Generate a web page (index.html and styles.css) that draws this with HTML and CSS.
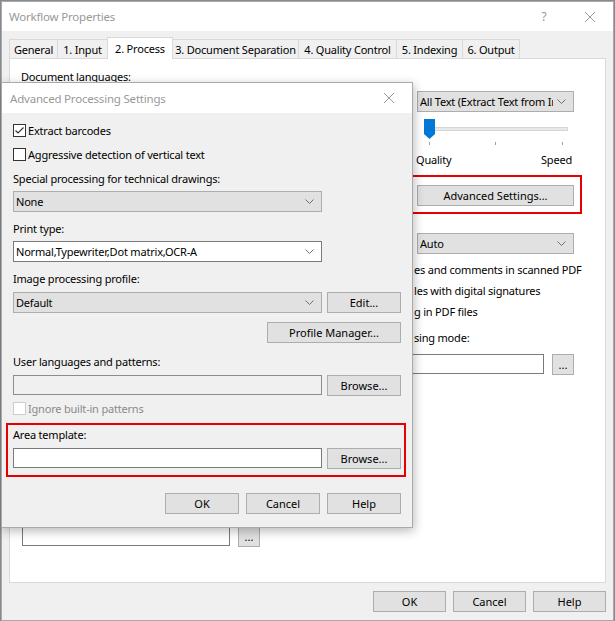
FILE: index.html
```html
<!DOCTYPE html>
<html lang="en">
<head>
    <meta charset="UTF-8">
    <title>Workflow Properties</title>
    <link rel="stylesheet" href="styles.css">
</head>
<body>
    <div class="window">
        <div class="titlebar">
            <span class="title">Workflow Properties</span>
            <span class="title-btn">?</span>
            <span class="title-btn">
                <svg width="10" height="10" viewBox="0 0 10 10"><path d="M0 0L10 10M10 0L0 10" stroke="#999" stroke-width="1"/></svg>
            </span>
        </div>
        <div class="window-body">
            <div class="tabs">
                <div class="tab">General</div>
                <div class="tab">1. Input</div>
                <div class="tab active">2. Process</div>
                <div class="tab">3. Document Separation</div>
                <div class="tab">4. Quality Control</div>
                <div class="tab">5. Indexing</div>
                <div class="tab">6. Output</div>
            </div>
            <div class="panel">
                <div class="panel-cols">
                    <div class="panel-left">
                        <div class="label">Document languages:</div>
                    </div>
                    <div class="panel-right">
                        <div class="combo combo-top">
                            <span class="combo-text">All Text (Extract Text from Images)</span>
                            <svg class="chevron" width="9" height="5" viewBox="0 0 9 5"><path d="M0.5 0.5L4.5 4.5L8.5 0.5" fill="none" stroke="#707070"/></svg>
                        </div>
                        <svg class="slider" width="160" height="31" viewBox="0 0 160 31">
                            <rect x="10.5" y="12.5" width="143" height="3" fill="#e7eaea" stroke="#d6d6d6"/>
                            <path d="M10 4H21V19L15.5 24L10 19Z" fill="#0078d7"/>
                            <rect x="15" y="27" width="1" height="3" fill="#a0a0a0"/>
                            <rect x="81" y="27" width="1" height="3" fill="#a0a0a0"/>
                            <rect x="148" y="27" width="1" height="3" fill="#a0a0a0"/>
                        </svg>
                        <div class="slider-labels">
                            <span>Quality</span>
                            <span>Speed</span>
                        </div>
                        <div class="highlight highlight-right">
                            <button class="btn btn-wide">Advanced Settings...</button>
                        </div>
                        <div class="combo combo-auto">
                            <span class="combo-text">Auto</span>
                            <svg class="chevron" width="9" height="5" viewBox="0 0 9 5"><path d="M0.5 0.5L4.5 4.5L8.5 0.5" fill="none" stroke="#707070"/></svg>
                        </div>
                        <div class="option-line first">es and comments in scanned PDF</div>
                        <div class="option-line">les with digital signatures</div>
                        <div class="option-line">g in PDF files</div>
                        <div class="option-line mode">sing mode:</div>
                        <div class="file-row file-row-right">
                            <input class="edit" type="text">
                            <button class="btn btn-dots">...</button>
                        </div>
                    </div>
                </div>
                <div class="file-row file-row-bottom">
                    <input class="edit edit-bottom" type="text">
                    <button class="btn btn-dots">...</button>
                </div>
            </div>
            <div class="button-row">
                <button class="btn">OK</button>
                <button class="btn">Cancel</button>
                <button class="btn">Help</button>
            </div>
        </div>
    </div>

    <div class="dialog">
        <div class="dialog-titlebar">
            <span class="title">Advanced Processing Settings</span>
            <span class="title-btn">
                <svg width="10" height="10" viewBox="0 0 10 10"><path d="M0 0L10 10M10 0L0 10" stroke="#999" stroke-width="1"/></svg>
            </span>
        </div>
        <div class="dialog-body">
            <div class="check-row">
                <span class="checkbox">
                    <svg width="11" height="11" viewBox="0 0 11 11"><path d="M1.5 5.5L4 8L9.5 2.5" fill="none" stroke="#333" stroke-width="1.2"/></svg>
                </span>
                <span>Extract barcodes</span>
            </div>
            <div class="check-row row-gap">
                <span class="checkbox"></span>
                <span>Aggressive detection of vertical text</span>
            </div>
            <div class="label row-gap">Special processing for technical drawings:</div>
            <div class="combo combo-field">
                <span class="combo-text">None</span>
                <svg class="chevron" width="9" height="5" viewBox="0 0 9 5"><path d="M0.5 0.5L4.5 4.5L8.5 0.5" fill="none" stroke="#707070"/></svg>
            </div>
            <div class="label row-gap">Print type:</div>
            <div class="combo combo-field combo-white">
                <span class="combo-text">Normal,Typewriter,Dot matrix,OCR-A</span>
                <svg class="chevron" width="9" height="5" viewBox="0 0 9 5"><path d="M0.5 0.5L4.5 4.5L8.5 0.5" fill="none" stroke="#707070"/></svg>
            </div>
            <div class="label row-gap">Image processing profile:</div>
            <div class="field-row">
                <div class="combo">
                    <span class="combo-text">Default</span>
                    <svg class="chevron" width="9" height="5" viewBox="0 0 9 5"><path d="M0.5 0.5L4.5 4.5L8.5 0.5" fill="none" stroke="#707070"/></svg>
                </div>
                <button class="btn btn-side">Edit...</button>
            </div>
            <div class="manager-row">
                <button class="btn btn-manager">Profile Manager...</button>
            </div>
            <div class="label user-label">User languages and patterns:</div>
            <div class="field-row">
                <input class="edit edit-disabled" type="text" disabled>
                <button class="btn btn-side">Browse...</button>
            </div>
            <div class="check-row disabled ignore-row">
                <span class="checkbox"></span>
                <span>Ignore built-in patterns</span>
            </div>
            <div class="highlight highlight-dialog">
                <div class="label">Area template:</div>
                <div class="field-row">
                    <input class="edit" type="text">
                    <button class="btn btn-side">Browse...</button>
                </div>
            </div>
            <div class="button-row dialog-buttons">
                <button class="btn btn-dialog">OK</button>
                <button class="btn btn-dialog">Cancel</button>
                <button class="btn btn-dialog">Help</button>
            </div>
        </div>
    </div>
</body>
</html>
```

FILE: styles.css
```css
body {
    margin: 0;
    background: #858b92;
    font-family: "Noto Sans", "Open Sans", sans-serif;
    font-size: 11px;
    letter-spacing: -0.2px;
    color: #000;
}
.window {
    margin: 1px 0 0 1px;
    width: 613px;
    height: 620px;
    box-sizing: border-box;
    border: 1px solid #a9a9a9;
    background: #f0f0f0;
    display: flex;
    flex-direction: column;
}
.titlebar {
    height: 29px;
    background: #fff;
    display: flex;
    align-items: center;
    flex-shrink: 0;
}
.title {
    flex: 1;
    padding-left: 7px;
    color: #999;
    font-size: 11.5px;
}
.title-btn {
    width: 46px;
    height: 29px;
    display: flex;
    align-items: center;
    justify-content: center;
    color: #999;
    font-size: 12px;
}
.window-body {
    flex: 1;
    display: flex;
    flex-direction: column;
    padding: 6px 7px 0 7px;
}
.tabs {
    display: flex;
    align-items: flex-end;
    height: 21px;
}
.tab {
    height: 19px;
    box-sizing: border-box;
    border: 1px solid #d9d9d9;
    border-bottom: none;
    padding-top: 1px;
    margin-right: -1px;
    display: flex;
    align-items: center;
    justify-content: center;
    background: #f0f0f0;
    white-space: nowrap;
}
.tab:nth-child(1) { width: 49px; }
.tab:nth-child(2) { width: 51px; }
.tab:nth-child(3) { width: 66px; }
.tab:nth-child(4) { width: 127px; }
.tab:nth-child(5) { width: 99px; }
.tab:nth-child(6) { width: 67px; }
.tab:nth-child(7) { width: 58px; }
.tab.active {
    height: 22px;
    padding-top: 0;
    margin-bottom: -1px;
    background: #fff;
    position: relative;
    z-index: 1;
}
.panel {
    height: 525px;
    box-sizing: border-box;
    border: 1px solid #d9d9d9;
    background: #fff;
    padding: 10px 31px 0 11px;
    display: flex;
    flex-direction: column;
    flex-shrink: 0;
}
.panel-cols {
    display: flex;
}
.panel-left {
    flex: 1;
}
.panel-right {
    width: 160px;
    display: flex;
    flex-direction: column;
}
.label {
    line-height: 15px;
    white-space: nowrap;
}
.combo {
    flex: 1;
    height: 21px;
    box-sizing: border-box;
    border: 1px solid #adadad;
    background: #e1e1e1;
    display: flex;
    align-items: center;
    padding: 0 7px 0 2px;
    overflow: hidden;
}
.combo-text {
    flex: 1;
    white-space: nowrap;
    overflow: hidden;
}
.chevron {
    flex-shrink: 0;
    margin-left: 4px;
}
.combo-white {
    background: #fff;
    border-color: #7a7a7a;
}
.combo-top {
    flex: none;
    margin: 22px 0 0 3px;
}
.combo-auto {
    flex: none;
    margin: 19px 0 0 3px;
}
.slider {
    display: block;
    margin-top: 3px;
}
.slider-labels {
    display: flex;
    justify-content: space-between;
    padding: 0 2px;
    line-height: 15px;
    margin-top: 6px;
}
.highlight {
    border: 2px solid #e60000;
}
.highlight-right {
    margin: 8px -8px 0 -6px;
    padding: 8px 6px 6px 7px;
}
.btn {
    height: 21px;
    box-sizing: border-box;
    border: 1px solid #adadad;
    background: #e1e1e1;
    font: inherit;
    color: #000;
    padding: 0;
    width: 73px;
}
.btn-wide {
    width: 157px;
    display: block;
}
.btn-dots {
    width: 22px;
    flex-shrink: 0;
}
.btn-side {
    width: 74px;
    flex-shrink: 0;
}
.option-line {
    line-height: 15px;
    margin-top: 6px;
    white-space: nowrap;
}
.option-line.first {
    margin-top: 8px;
}
.option-line.mode {
    margin-top: 11px;
}
.file-row {
    display: flex;
    gap: 8px;
}
.file-row-right {
    margin: 9px 0 0 -120px;
}
.file-row-bottom {
    margin: 151px 0 0 1px;
}
.edit {
    flex: 1;
    height: 20px;
    box-sizing: border-box;
    border: 1px solid #7a7a7a;
    background: #fff;
    margin: 0;
    font: inherit;
}
.edit-bottom {
    flex: none;
    width: 208px;
}
.edit-disabled {
    background: #f0f0f0;
    border-color: #8c8c8c;
}
.button-row {
    display: flex;
    justify-content: flex-end;
    gap: 7px;
    margin-top: 8px;
}

.dialog {
    position: absolute;
    left: 1px;
    top: 82px;
    width: 412px;
    height: 446px;
    box-sizing: border-box;
    border: 1px solid #aaa;
    background: #f0f0f0;
    box-shadow: 1px 3px 10px rgba(0, 0, 0, 0.28);
    z-index: 5;
}
.dialog-titlebar {
    height: 30px;
    background: #fff;
    display: flex;
    align-items: center;
}
.dialog-titlebar .title {
    padding-left: 8px;
}
.dialog-titlebar .title-btn {
    height: 30px;
}
.dialog-body {
    padding: 10px 11px 0 11px;
    display: flex;
    flex-direction: column;
}
.check-row {
    display: flex;
    align-items: center;
    gap: 2px;
    line-height: 15px;
}
.checkbox {
    width: 13px;
    height: 13px;
    box-sizing: border-box;
    border: 1px solid #333;
    background: #fff;
    display: flex;
    align-items: center;
    justify-content: center;
    flex-shrink: 0;
}
.check-row.disabled {
    color: #8a8a8a;
}
.check-row.disabled .checkbox {
    border-color: #cccccc;
}
.row-gap {
    margin-top: 9px;
}
.combo-field {
    flex: none;
    margin-top: 5px;
    width: 309px;
}
.field-row {
    display: flex;
    gap: 5px;
    margin-top: 6px;
}
.manager-row {
    display: flex;
    justify-content: flex-end;
    margin-top: 9px;
}
.btn-manager {
    width: 134px;
}
.user-label {
    margin-top: 11px;
}
.ignore-row {
    margin-top: 5px;
}
.highlight-dialog {
    margin: 7px -5px 0 -7px;
    padding: 2px 3px 6px 5px;
}
.dialog-buttons {
    margin-top: 16px;
}
.btn-dialog {
    width: 74px;
}
```
